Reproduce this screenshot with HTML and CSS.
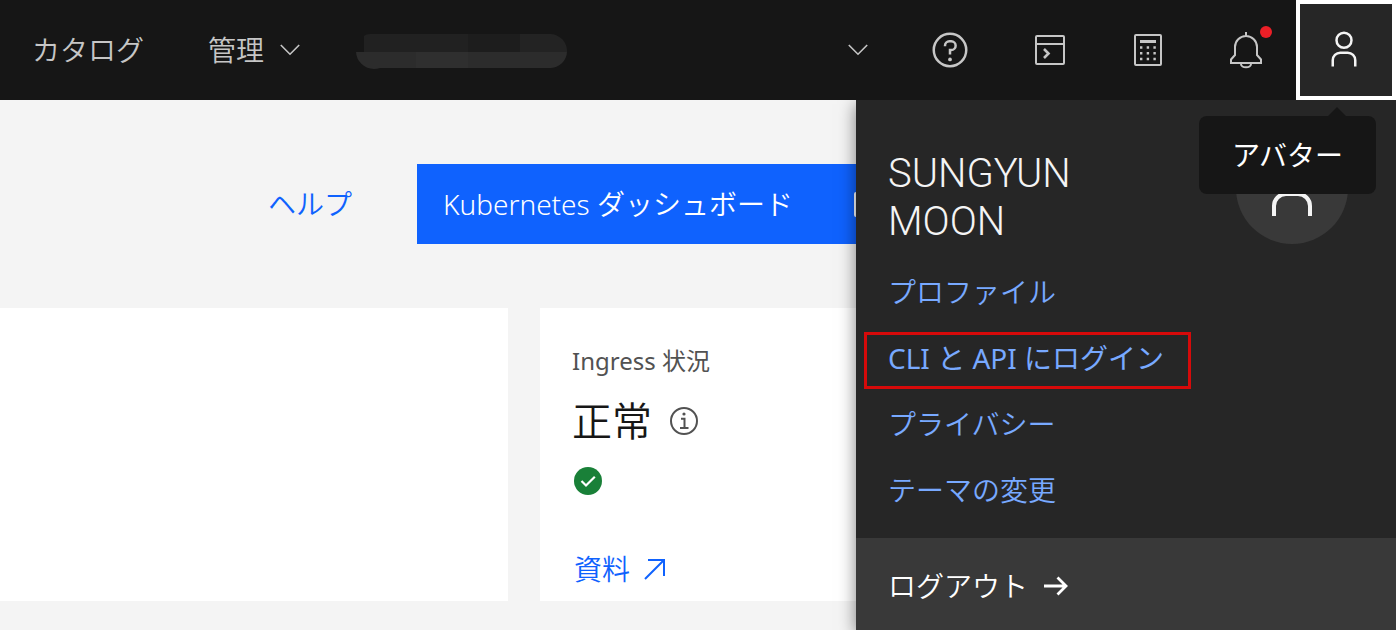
FILE: index.html
```html
<!DOCTYPE html>
<html lang="ja">
<head>
<meta charset="utf-8">
<meta name="viewport" content="width=device-width, initial-scale=1">
<title>Kubernetes クラスター</title>
<link rel="stylesheet" href="styles.css">
</head>
<body>
<header class="header">
  <nav class="nav">
    <a class="nav-item" href="#catalog">カタログ</a>
    <button class="nav-item" type="button">管理
      <svg class="chevron" viewBox="0 0 20 12"><path d="M.8 1 10 10.2 19.2 1"/></svg>
    </button>
  </nav>
  <button class="account" type="button" aria-label="アカウント">
    <svg class="account-mask" viewBox="0 0 212 36">
      <path fill="#212121" d="M8 2q2-2 6-2h98v18H8z"/>
      <path fill="#1d1d1d" d="M112 0h52v18h-52z"/>
      <path fill="#232323" d="M164 0h30a17 17 0 0 1 17 18h-47z"/>
      <path fill="#2c2c2c" d="M0 18h211a17 17 0 0 1-16 16H24q-3 1-6 1A18 18 0 0 1 0 18z"/>
      <path fill="#2f2f2f" d="M60 18h52v16H60z"/>
    </svg>
    <svg class="chevron" viewBox="0 0 20 12"><path d="M.8 1 10 10.2 19.2 1"/></svg>
  </button>
  <div class="tools">
    <button class="tool" type="button" aria-label="ヘルプ">
      <svg class="icon" viewBox="0 0 32 32" fill="currentColor"><path d="M16 2a14 14 0 1 0 14 14A14 14 0 0 0 16 2Zm0 26a12 12 0 1 1 12-12 12 12 0 0 1-12 12Z"/><circle cx="16" cy="23.5" r="1.5"/><path d="M17 8h-1.5a4.49 4.49 0 0 0-4.5 4.5v.5h2v-.5a2.5 2.5 0 0 1 2.5-2.5H17a2.5 2.5 0 0 1 0 5h-2v4.5h2V17a4.5 4.5 0 0 0 0-9Z"/></svg>
    </button>
    <button class="tool" type="button" aria-label="シェル">
      <svg class="icon" viewBox="0 0 40 40" fill="none" stroke="currentColor" stroke-width="2"><rect x="7" y="6" width="28" height="28" rx="1"/><path d="M7 14h28"/><path stroke-width="2.6" d="m15 19 4.5 4.5L15 28"/></svg>
    </button>
    <button class="tool" type="button" aria-label="見積もり">
      <svg class="icon" viewBox="0 0 40 40" fill="none" stroke="currentColor" stroke-width="2"><rect x="7" y="5" width="26" height="30" rx="1"/><path stroke-width="3" d="M12 11.5h16"/><path stroke-width="2.4" stroke-dasharray="2.4 4.3" d="M12 17.5h16M12 23.2h16M12 29h16"/></svg>
    </button>
    <button class="tool" type="button" aria-label="通知">
      <svg class="icon" viewBox="0 0 40 40" fill="none" stroke="currentColor" stroke-width="2"><path d="M19 2v4M4 33v-3.500l4-4.500V17a11 11 0 0 1 22 0v8l4 4.500V33z"/><path d="M14 34a5 3.300 0 0 0 10 0"/></svg>
      <span class="dot"></span>
    </button>
    <button class="tool tool-avatar" type="button" aria-label="アバター" aria-describedby="tip">
      <svg class="icon" viewBox="0 0 32 32" fill="currentColor"><path d="M16 4a5 5 0 1 1-5 5 5 5 0 0 1 5-5m0-2a7 7 0 1 0 7 7 7 7 0 0 0-7-7ZM26 30h-2v-5a5 5 0 0 0-5-5h-6a5 5 0 0 0-5 5v5H6v-5a7 7 0 0 1 7-7h6a7 7 0 0 1 7 7Z"/></svg>
    </button>
  </div>
  <div class="tooltip" id="tip" role="tooltip">アバター</div>
</header>

<div class="page">
  <main>
    <div class="toolbar">
      <a class="link" href="#help">ヘルプ</a>
      <button class="primary" type="button">
        <span>Kubernetes ダッシュボード</span>
        <svg class="launch" viewBox="0 0 32 32" fill="none" stroke="currentColor" stroke-width="2"><path d="M15 5H3a1 1 0 0 0-1 1v21a1 1 0 0 0 1 1h21a1 1 0 0 0 1-1V16M19 3h10v10M29 3 18 14"/></svg>
      </button>
    </div>
    <div class="cards">
      <section class="card"></section>
      <section class="card">
        <p class="label">Ingress 状況</p>
        <h2 class="status">正常
          <svg class="info" viewBox="0 0 28 28"><circle cx="14" cy="14" r="13" fill="none" stroke="#525252" stroke-width="2"/><circle cx="14" cy="7" r="1.600" fill="#525252"/><path d="M11 11.800h3.500v9.200M10 21h8.500" fill="none" stroke="#525252" stroke-width="2"/></svg>
        </h2>
        <svg class="check" viewBox="0 0 28 28"><circle cx="14" cy="14" r="14" fill="#198038"/><path d="m7.500 14 4.500 4.500 8.800-8.800" fill="none" stroke="#fff" stroke-width="2.200"/></svg>
        <a class="link docs" href="#docs">資料
          <svg class="arrow-out" viewBox="0 0 22 22" fill="none" stroke="currentColor" stroke-width="2"><path d="M4 2h16v16M20 2 1 21"/></svg>
        </a>
      </section>
    </div>
  </main>

  <aside class="panel">
    <div class="panel-main">
      <div class="profile">
        <h1 class="name">SUNGYUN MOON</h1>
        <div class="avatar">
          <svg viewBox="0 0 32 32" fill="currentColor"><path d="M16 4a5 5 0 1 1-5 5 5 5 0 0 1 5-5m0-2a7 7 0 1 0 7 7 7 7 0 0 0-7-7ZM26 30h-2v-5a5 5 0 0 0-5-5h-6a5 5 0 0 0-5 5v5H6v-5a7 7 0 0 1 7-7h6a7 7 0 0 1 7 7Z"/></svg>
        </div>
      </div>
      <ul class="menu">
        <li><a href="#profile">プロファイル</a></li>
        <li><a class="marked" href="#login">CLI と API にログイン</a></li>
        <li><a href="#privacy">プライバシー</a></li>
        <li><a href="#theme">テーマの変更</a></li>
      </ul>
    </div>
    <button class="logout" type="button">ログアウト
      <svg class="arrow" viewBox="0 0 24 20" fill="none" stroke="currentColor" stroke-width="2.800"><path d="M0 10h22M13.500 1.500 22 10l-8.500 8.500"/></svg>
    </button>
  </aside>
</div>
</body>
</html>
```
FILE: styles.css
```css
* { box-sizing: border-box; }

body {
  margin: 0;
  min-height: 100vh;
  display: flex;
  flex-direction: column;
  background: #f4f4f4;
  color: #161616;
  font-family: "Noto Sans", "Noto Sans CJK JP", sans-serif;
  font-size: 28px;
  font-weight: 350;
  line-height: 36px;
}

button {
  margin: 0;
  padding: 0;
  border: 0;
  background: none;
  color: inherit;
  font: inherit;
  text-align: left;
}

a { text-decoration: none; }
svg { display: block; flex: none; }
h1, h2, p, ul { margin: 0; padding: 0; font-weight: inherit; }

.header {
  position: relative;
  z-index: 2;
  display: flex;
  height: 100px;
  background: #161616;
  color: #c6c6c6;
}

.nav {
  display: flex;
  gap: 64px;
  padding: 0 56px 0 32px;
}

.nav-item {
  display: flex;
  align-items: center;
  gap: 16px;
  color: #c6c6c6;
}

.chevron {
  width: 20px;
  height: 12px;
  fill: none;
  stroke: currentColor;
  stroke-width: 1.6;
}

.account {
  flex: 1;
  display: flex;
  align-items: center;
  justify-content: space-between;
  padding-right: 32px;
}

.account-mask { width: 212px; height: 36px; margin-top: 4px; }

.tools { display: flex; }

.tool {
  position: relative;
  display: flex;
  align-items: center;
  justify-content: center;
  width: 99px;
}

.icon { width: 40px; height: 40px; }

.dot {
  position: absolute;
  top: 26px;
  right: 24px;
  width: 12px;
  height: 12px;
  border-radius: 50%;
  background: #eb1f27;
}

.tool-avatar {
  width: 100px;
  padding: 0 4px 2px 0;
  border: 4px solid #fff;
  background: #262626;
  color: #f4f4f4;
}

.tooltip {
  position: absolute;
  top: 116px;
  right: 20px;
  padding: 21px 33px;
  border-radius: 8px;
  background: #161616;
  color: #fff;
  font-weight: 400;
}

.tooltip::before {
  content: "";
  position: absolute;
  top: -9px;
  right: 30px;
  border: 9px solid transparent;
  border-top-width: 0;
  border-bottom-color: #161616;
}

.page {
  position: relative;
  flex: 1;
  overflow: hidden;
}

.toolbar {
  display: flex;
  align-items: center;
  gap: 65px;
  padding: 64px 0 64px 268px;
}

.link { color: #0f62fe; }

.primary {
  display: flex;
  align-items: center;
  justify-content: space-between;
  width: 496px;
  height: 80px;
  padding: 0 28px 0 26px;
  background: #0f62fe;
  color: #fff;
}

.launch { width: 32px; height: 32px; }

.cards {
  display: grid;
  grid-template-columns: 508fr 856fr;
  gap: 32px;
}

.card {
  padding: 36px 32px 14px;
  background: #fff;
}

.label {
  color: #525252;
  font-size: 24px;
  font-weight: 400;
  line-height: 34px;
}

.status {
  display: flex;
  align-items: center;
  gap: 18px;
  margin: 19px 0 22px;
  font-size: 40px;
  line-height: 48px;
}

.info { width: 28px; height: 28px; }
.check { width: 28px; height: 28px; margin: 0 0 56px 2px; }

.docs {
  display: flex;
  align-items: center;
  gap: 14px;
  padding-left: 2px;
}

.arrow-out { width: 22px; height: 22px; }

.panel {
  position: absolute;
  top: 0;
  right: 0;
  bottom: 0;
  display: flex;
  flex-direction: column;
  width: 540px;
  max-width: 100%;
  background: #262626;
  color: #f4f4f4;
  box-shadow: 0 4px 16px rgba(0, 0, 0, 0.5);
}

.panel-main { padding: 32px 48px 30px 32px; }

.profile {
  display: flex;
  justify-content: space-between;
}

.name {
  max-width: 240px;
  padding-top: 18px;
  font-family: Roboto, sans-serif;
  font-size: 40px;
  line-height: 48px;
}

.avatar {
  display: flex;
  align-items: center;
  justify-content: center;
  width: 112px;
  height: 112px;
  border-radius: 50%;
  background: #393939;
}

.avatar svg { width: 64px; height: 64px; }

.menu {
  display: flex;
  flex-direction: column;
  gap: 30px;
  padding-top: 28px;
  list-style: none;
}

.menu li { display: flex; }

.menu a {
  position: relative;
  color: #78a9ff;
}

.menu .marked { font-weight: 400; }

.marked::after {
  content: "";
  position: absolute;
  inset: -8px -27px -13px -24px;
  border: 3px solid #d60a0a;
}

.logout {
  flex: 1;
  display: flex;
  align-items: center;
  gap: 16px;
  padding: 30px 32px 26px;
  background: #393939;
  color: #fff;
}

.arrow { width: 24px; height: 20px; }
```
